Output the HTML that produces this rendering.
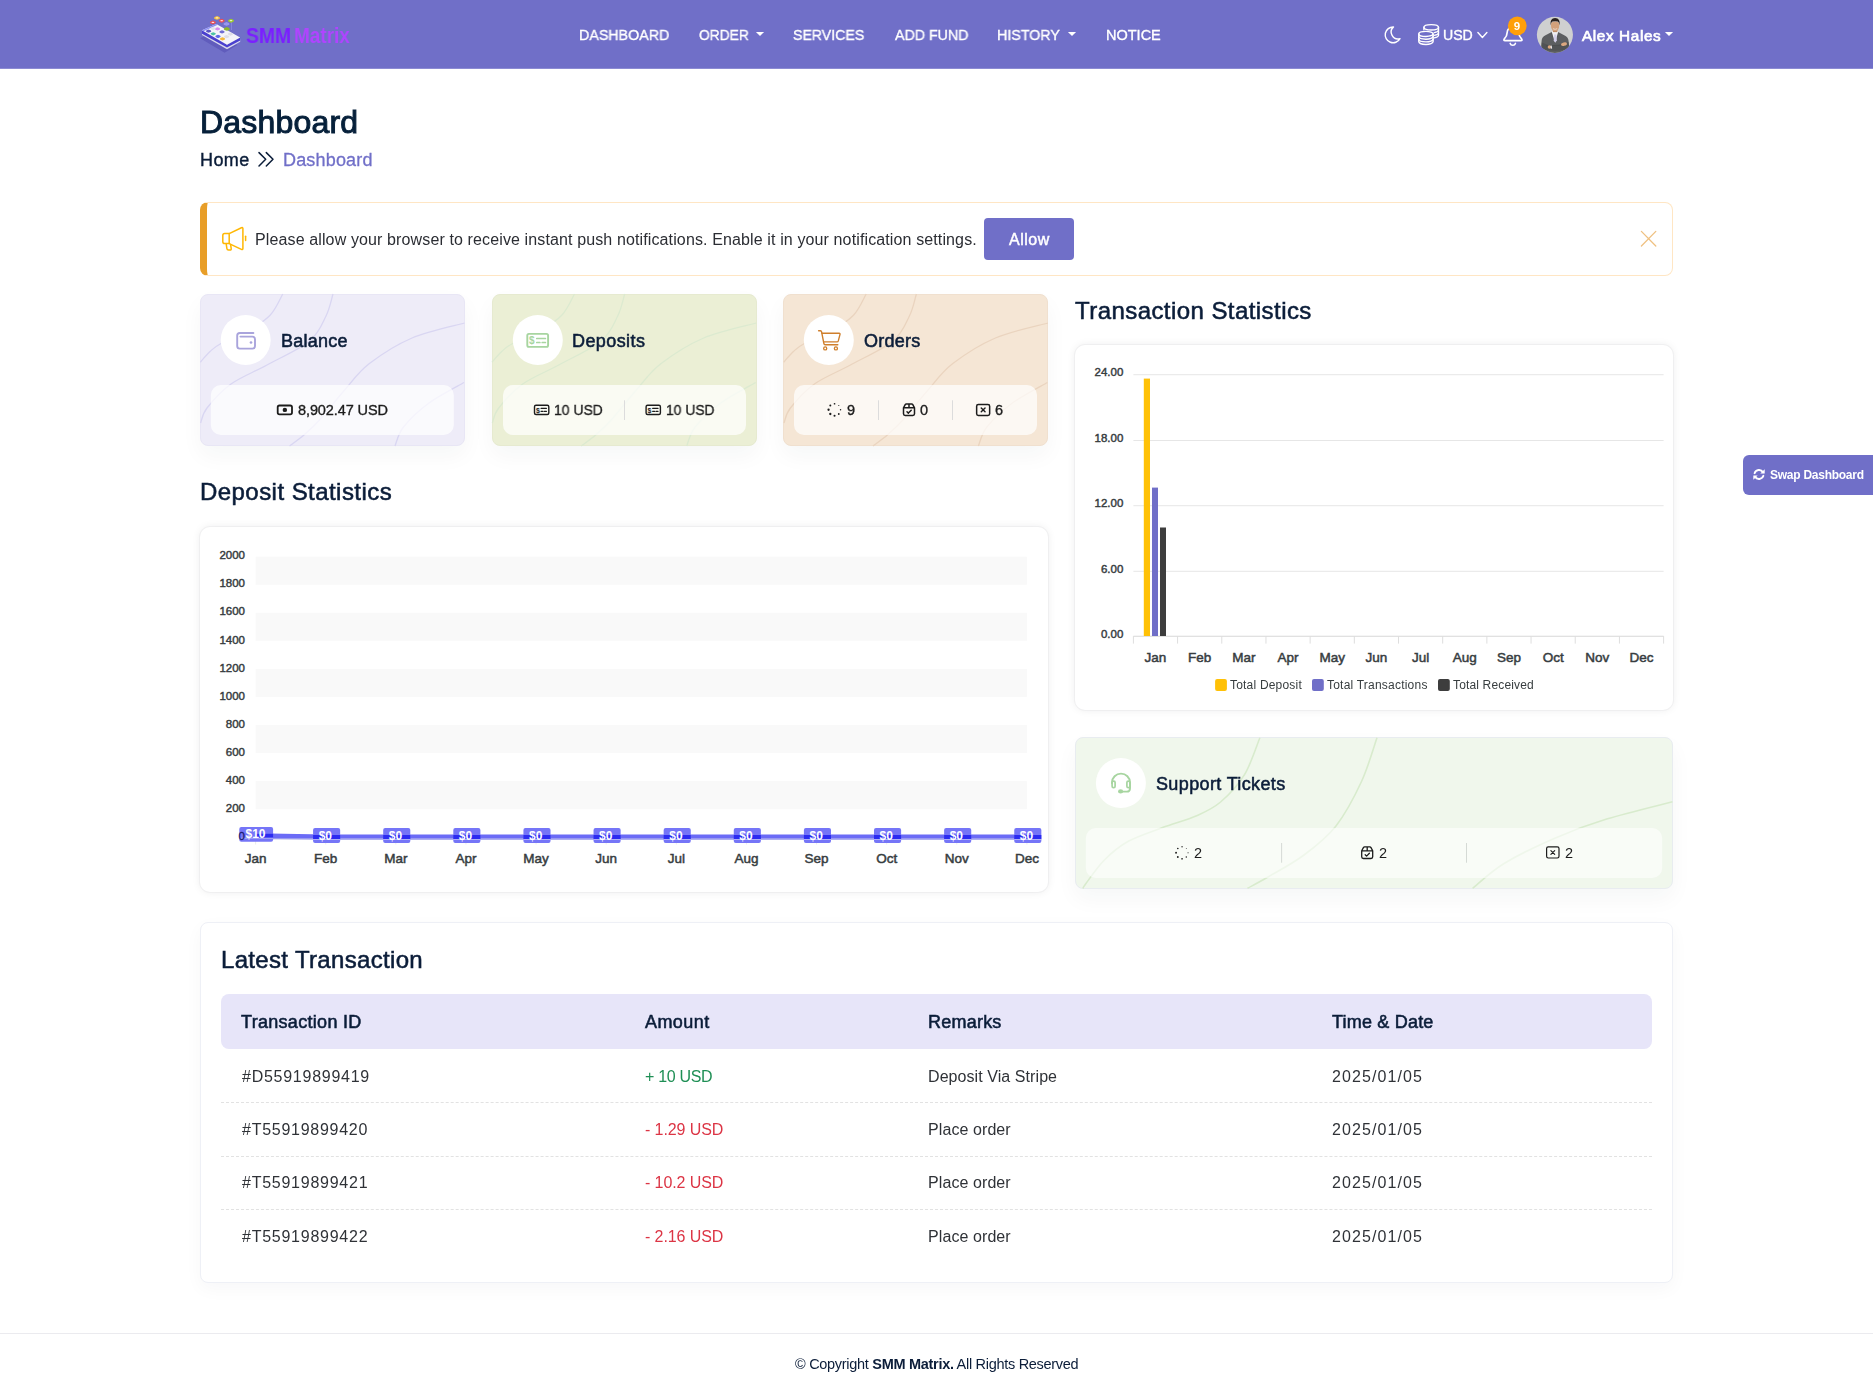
<!DOCTYPE html>
<html lang="en"><head><meta charset="utf-8"><title>SMM Matrix | Dashboard</title>
<style>

*{box-sizing:border-box;margin:0;padding:0}
html,body{width:1873px;height:1394px;overflow:hidden;background:#fff}
body{position:relative;font-family:"Liberation Sans",sans-serif;color:#2b2f38}
.t{position:absolute;white-space:nowrap;line-height:1;display:block;will-change:transform}
.abs{position:absolute}
.nav{left:0;top:0;width:1873px;height:69px;background:#706fc8;border-bottom:1px solid #8c8bd3}
.card{position:absolute;border-radius:8px;border:1px solid transparent;box-shadow:0 10px 22px rgba(30,40,60,.04)}
.wcard{position:absolute;background:#fff;border-radius:10px;box-shadow:0 0 0 1px rgba(20,20,40,.03),0 0 9px rgba(20,20,40,.08)}
.tcard{position:absolute;background:#fff;border:1px solid #eef0f6;border-radius:8px;box-shadow:0 6px 18px rgba(30,40,60,.035)}
svg.layer{position:absolute;left:0;top:0;width:1873px;height:1394px;overflow:visible}

</style></head><body>
<div class="abs nav"></div>
<div class="abs" style="left:200px;top:202px;width:1473px;height:74px;border:1px solid #ffe6c4;border-left:7px solid #e89e28;border-radius:8px;background:#fff"></div>
<div class="abs" style="left:984px;top:218px;width:90px;height:42px;border-radius:4px;background:#706fc8"></div>
<div class="card" style="left:200px;top:294px;width:265px;height:152px;background:#eeecf8;border-color:#e8e6f5"></div>
<div class="card" style="left:491.7px;top:294px;width:265px;height:152px;background:#ebefd5;border-color:#e6ead0"></div>
<div class="card" style="left:783.4px;top:294px;width:265px;height:152px;background:#f5e6d5;border-color:#f0e0cf"></div>
<div class="card" style="left:1075px;top:737px;width:598px;height:152px;background:#f0f7ec;border:1px solid #e8ecf0;border-radius:8px"></div>
<div class="wcard" style="left:200px;top:526.7px;width:848.4px;height:365.5px"></div>
<div class="wcard" style="left:1075.2px;top:345px;width:597.6px;height:365px"></div>
<div class="tcard" style="left:200px;top:922px;width:1473px;height:361px"></div>
<div class="abs" style="left:221px;top:994px;width:1430.6px;height:55px;border-radius:8px;background:#e7e5f9"></div>
<div class="abs" style="left:221px;top:1101.9px;width:1430.6px;height:0;border-top:1px dashed #e2e2e2"></div>
<div class="abs" style="left:221px;top:1155.7px;width:1430.6px;height:0;border-top:1px dashed #e2e2e2"></div>
<div class="abs" style="left:221px;top:1208.7px;width:1430.6px;height:0;border-top:1px dashed #e2e2e2"></div>
<div class="abs" style="left:0;top:1332.5px;width:1873px;height:1px;background:#ebebef"></div>
<div class="abs" style="left:1743px;top:455px;width:130px;height:39.6px;border-radius:6px 0 0 6px;background:#706fc8"></div>
<svg class="layer" viewBox="0 0 1873 1394">
<path d="M282.8,294.0 C280.7,297.5 276.1,308.8 270.3,315.0 C264.5,321.2 256.3,326.2 248.0,331.0 C239.7,335.8 226.9,340.4 220.6,343.8 C214.3,347.2 213.4,348.4 210.0,351.5 C206.6,354.6 201.9,360.4 200.3,362.2" fill="none" stroke="#d9d6f2" stroke-width="1.3"/>
<path d="M333.0,294.0 C331.8,297.7 329.9,308.2 326.0,316.0 C322.1,323.8 319.4,332.8 309.6,341.0 C299.8,349.2 280.1,357.8 267.0,365.0 C253.9,372.2 241.0,376.8 231.0,384.0 C221.0,391.2 212.1,401.5 207.0,408.0 C201.9,414.5 201.7,420.5 200.6,423.0" fill="none" stroke="#d9d6f2" stroke-width="1.3"/>
<path d="M464.5,323.0 C455.8,325.5 427.9,331.2 412.0,338.0 C396.1,344.8 380.8,354.8 369.4,363.6 C358.0,372.4 352.0,381.7 343.8,391.0 C335.6,400.3 326.6,412.2 320.0,419.5 C313.4,426.8 309.6,430.1 304.5,434.5 C299.4,438.9 292.1,444.1 289.6,446.0" fill="none" stroke="#d9d6f2" stroke-width="1.3"/>
<path d="M464.0,382.5 C458.2,385.9 439.1,395.6 429.0,403.0 C418.9,410.4 409.2,419.8 403.5,427.0 C397.8,434.2 396.4,442.8 395.0,446.0" fill="none" stroke="#d9d6f2" stroke-width="1.3"/>
<path d="M574.5,294.0 C572.4,297.5 567.8,308.8 562.0,315.0 C556.2,321.2 548.0,326.2 539.7,331.0 C531.4,335.8 518.6,340.4 512.3,343.8 C506.0,347.2 505.1,348.4 501.7,351.5 C498.3,354.6 493.6,360.4 492.0,362.2" fill="none" stroke="#dcead0" stroke-width="1.3"/>
<path d="M624.7,294.0 C623.5,297.7 621.6,308.2 617.7,316.0 C613.8,323.8 611.1,332.8 601.3,341.0 C591.5,349.2 571.8,357.8 558.7,365.0 C545.6,372.2 532.7,376.8 522.7,384.0 C512.7,391.2 503.8,401.5 498.7,408.0 C493.6,414.5 493.4,420.5 492.3,423.0" fill="none" stroke="#dcead0" stroke-width="1.3"/>
<path d="M756.2,323.0 C747.5,325.5 719.6,331.2 703.7,338.0 C687.9,344.8 672.5,354.8 661.1,363.6 C649.7,372.4 643.7,381.7 635.5,391.0 C627.3,400.3 618.2,412.2 611.7,419.5 C605.2,426.8 601.3,430.1 596.2,434.5 C591.1,438.9 583.8,444.1 581.3,446.0" fill="none" stroke="#dcead0" stroke-width="1.3"/>
<path d="M755.7,382.5 C749.9,385.9 730.8,395.6 720.7,403.0 C710.6,410.4 700.9,419.8 695.2,427.0 C689.5,434.2 688.1,442.8 686.7,446.0" fill="none" stroke="#dcead0" stroke-width="1.3"/>
<path d="M866.2,294.0 C864.1,297.5 859.5,308.8 853.7,315.0 C847.9,321.2 839.7,326.2 831.4,331.0 C823.1,335.8 810.3,340.4 804.0,343.8 C797.7,347.2 796.8,348.4 793.4,351.5 C790.0,354.6 785.3,360.4 783.7,362.2" fill="none" stroke="#ead4bf" stroke-width="1.3"/>
<path d="M916.4,294.0 C915.2,297.7 913.3,308.2 909.4,316.0 C905.5,323.8 902.8,332.8 893.0,341.0 C883.2,349.2 863.5,357.8 850.4,365.0 C837.3,372.2 824.4,376.8 814.4,384.0 C804.4,391.2 795.5,401.5 790.4,408.0 C785.3,414.5 785.1,420.5 784.0,423.0" fill="none" stroke="#ead4bf" stroke-width="1.3"/>
<path d="M1047.9,323.0 C1039.2,325.5 1011.2,331.2 995.4,338.0 C979.5,344.8 964.2,354.8 952.8,363.6 C941.4,372.4 935.4,381.7 927.2,391.0 C919.0,400.3 910.0,412.2 903.4,419.5 C896.8,426.8 893.0,430.1 887.9,434.5 C882.8,438.9 875.5,444.1 873.0,446.0" fill="none" stroke="#ead4bf" stroke-width="1.3"/>
<path d="M1047.4,382.5 C1041.6,385.9 1022.5,395.6 1012.4,403.0 C1002.3,410.4 992.6,419.8 986.9,427.0 C981.2,434.2 979.8,442.8 978.4,446.0" fill="none" stroke="#ead4bf" stroke-width="1.3"/>
<path d="M1259.9,737.8 C1257.3,743.9 1251.0,764.0 1244.5,774.7 C1238.0,785.4 1228.6,795.2 1220.6,802.0 C1212.6,808.8 1206.4,811.4 1196.7,815.7 C1187.0,820.0 1173.9,823.3 1162.5,827.6 C1151.1,831.9 1138.0,835.9 1128.3,841.3 C1118.6,846.7 1111.5,852.9 1104.4,860.0 C1097.3,867.1 1089.2,879.2 1085.6,884.0 C1082.0,888.8 1083.4,887.8 1083.0,888.5" fill="none" stroke="#d8ebcd" stroke-width="1.6"/>
<path d="M1377.0,737.8 C1374.4,745.1 1368.3,766.8 1361.5,781.5 C1354.7,796.2 1345.6,813.6 1336.0,825.9 C1326.4,838.1 1315.3,846.5 1304.0,855.0 C1292.7,863.5 1277.4,871.5 1268.0,877.0 C1258.6,882.5 1250.9,886.4 1247.5,888.3" fill="none" stroke="#d8ebcd" stroke-width="1.6"/>
<path d="M1672.5,801.8 C1661.5,804.7 1626.1,813.1 1606.6,819.1 C1587.1,825.1 1572.5,830.5 1555.4,837.9 C1538.3,845.3 1517.9,855.1 1504.1,863.5 C1490.3,871.9 1477.8,884.2 1472.6,888.3" fill="none" stroke="#d8ebcd" stroke-width="1.6"/>
<rect x="210.8" y="385" width="243" height="50" rx="10" fill="#fff" fill-opacity=".72"/>
<rect x="503" y="385" width="243" height="50" rx="10" fill="#fff" fill-opacity=".72"/>
<rect x="794" y="385" width="243" height="50" rx="10" fill="#fff" fill-opacity=".72"/>
<rect x="1085.8" y="828" width="576.4" height="50" rx="10" fill="#fff" fill-opacity=".6"/>
<circle cx="245.7" cy="340" r="25" fill="#fff"/>
<circle cx="537.8" cy="340" r="25" fill="#fff"/>
<circle cx="828.8" cy="340" r="25" fill="#fff"/>
<circle cx="1120.9" cy="783" r="25" fill="#fff"/>
<rect x="624.0" y="400.3" width="1" height="19.7" fill="#dcdcdc"/>
<rect x="878.0" y="400.3" width="1" height="19.7" fill="#dcdcdc"/>
<rect x="952.0" y="400.3" width="1" height="19.7" fill="#dcdcdc"/>
<rect x="1281.1" y="843" width="1" height="19.7" fill="#d5dad5"/>
<rect x="1466.0" y="843" width="1" height="19.7" fill="#d5dad5"/>
<path d="M755.9,32 L764.1,32 L760.0,36.1 Z" fill="#fff"/>
<path d="M1067.9,32 L1076.1,32 L1072.0,36.1 Z" fill="#fff"/>
<path d="M1664.9,32 L1673.1,32 L1669.0,36.1 Z" fill="#fff"/>
<g transform="translate(1385.5 26.2) scale(0.93)"><path d="M8.6,0.8 A8.5,8.5 0 1 0 15.6,13.4 A7.4,7.4 0 0 1 8.6,0.8 Z" fill="none" stroke="#fff" stroke-width="1.5" stroke-linecap="round" stroke-linejoin="round" /></g>
<path d="M1418.8,33.9 a7.15,2.5 0 1 0 14.3,0 a7.15,2.5 0 1 0 -14.3,0 Z" fill="none" stroke="#fff" stroke-width="1.45" stroke-linecap="round" stroke-linejoin="round" />
<path d="M1418.8,33.9 v7.7 a7.15,2.9 0 0 0 14.3,0 v-7.7" fill="none" stroke="#fff" stroke-width="1.45" stroke-linecap="round" stroke-linejoin="round" />
<path d="M1418.8,36.3 a7.15,2.9 0 0 0 14.3,0" fill="none" stroke="#fff" stroke-width="1.35" stroke-linecap="round" stroke-linejoin="round" />
<path d="M1418.8,38.95 a7.15,2.9 0 0 0 14.3,0" fill="none" stroke="#fff" stroke-width="1.35" stroke-linecap="round" stroke-linejoin="round" />
<path d="M1423.9,27.3 a7.3,2.7 0 1 0 14.6,0 a7.3,2.7 0 1 0 -14.6,0 Z" fill="none" stroke="#fff" stroke-width="1.4" stroke-linecap="round" stroke-linejoin="round" />
<path d="M1423.9,27.3 v2.4 M1438.5,27.3 v8 a7.3,2.9 0 0 1 -4.3,2.6" fill="none" stroke="#fff" stroke-width="1.4" stroke-linecap="round" stroke-linejoin="round" />
<path d="M1438.5,30.1 a7.3,2.9 0 0 1 -4.3,2.6 M1438.5,32.8 a7.3,2.9 0 0 1 -4.3,2.6" fill="none" stroke="#fff" stroke-width="1.3" stroke-linecap="round" stroke-linejoin="round" />
<path d="M1477.9,32.6 L1482.4,37.4 L1486.9,32.6" fill="none" stroke="#fff" stroke-width="1.4" stroke-linecap="round" stroke-linejoin="round" />
<path d="M1504.3,38.9 C1505.8,37.4 1507.1,35.8 1507.1,32.8 A5.85,5.85 0 0 1 1518.8,32.8 C1518.8,35.8 1520.1,37.4 1521.6,38.9 Q1522.8,40.7 1520.8,40.7 H1505.1 Q1503.1,40.7 1504.3,38.9 Z" fill="none" stroke="#fff" stroke-width="1.7" stroke-linecap="round" stroke-linejoin="round" />
<path d="M1510.2,43.4 a2.7,2.5 0 0 0 5.2,0" fill="none" stroke="#fff" stroke-width="1.6" stroke-linecap="round" stroke-linejoin="round" />
<circle cx="1517.3" cy="25.8" r="9.4" fill="#ff9f0a"/>
<clipPath id="avc"><circle cx="1554.9" cy="34.85" r="18.05"/></clipPath>
<g clip-path="url(#avc)">
<rect x="1536" y="16" width="38" height="38" fill="#cfd0d0"/>
<path d="M1540.8,54 L1541.6,41 Q1541.8,36.6 1545.5,35.2 L1551.2,32.2 L1555.1,36 L1558.6,32.2 L1564.2,35.2 Q1568.2,36.6 1568.6,41 L1569.6,54 Z" fill="#5c5e60"/>
<path d="M1551.2,32.2 L1555.1,43.5 L1558.6,32.2 L1557.6,31.6 L1555.1,35 L1552.2,31.6 Z" fill="#4a4c4e"/>
<path d="M1551.6,31.6 L1555.1,43 L1558.3,31.6 L1556.5,30.6 L1553.5,30.6 Z" fill="#f0f0f2"/>
<path d="M1554.2,34.4 L1556.3,34.4 L1556.9,40.4 L1555.2,42.6 L1553.7,40.4 Z" fill="#d3cfea"/>
<rect x="1552.9" y="28.5" width="4.4" height="3.6" fill="#b9855f"/>
<path d="M1550.9,25 Q1550.7,21.6 1555.1,21.4 Q1559.5,21.6 1559.3,25 Q1559.3,28.6 1557.6,30.4 Q1555.1,32.2 1552.6,30.4 Q1550.9,28.6 1550.9,25 Z" fill="#d2a17b"/>
<path d="M1553,28.7 Q1555.1,30 1557.2,28.7" fill="none" stroke="#f4ece6" stroke-width=".7"/>
<path d="M1550.6,25.4 Q1549.6,18.4 1555.1,18.1 Q1560.6,18.4 1559.6,25.4 Q1559.2,22.2 1557.8,21.6 Q1555.1,21 1552.4,21.6 Q1551,22.2 1550.6,25.4 Z" fill="#2a2320"/>
<path d="M1541.8,42.5 Q1548,46 1556,45.4 Q1563,45 1568.4,42 L1569.4,48.6 Q1556,53 1541.4,48.8 Z" fill="#515355"/>
<path d="M1546,46 L1566,44.6" stroke="#444648" stroke-width=".6"/>
<ellipse cx="1564" cy="44.1" rx="3" ry="1.7" fill="#dba77f" transform="rotate(-12 1564 44.1)"/>
<ellipse cx="1549.4" cy="47" rx="1.7" ry="1.7" fill="#dba77f"/>
<rect x="1550.6" y="45.6" width="1.3" height="3" fill="#eceaf0" transform="rotate(-8 1551 47)"/>
</g>
<path d="M259,152.6 L265.7,159.3 L259,166 M266.3,152.6 L273,159.3 L266.3,166" fill="none" stroke="#0b1d39" stroke-width="1.5" stroke-linecap="round" stroke-linejoin="round" />
<path d="M229.2,233.6 H224.6 Q222.8,233.6 222.8,235.4 V241.8 Q222.8,243.6 224.6,243.6 H229.2 L241.4,249.4 Q242.9,250 242.9,248.4 V228.6 Q242.9,227 241.4,227.7 L229.2,233.6 V243.6" fill="none" stroke="#ffb703" stroke-width="1.5" stroke-linecap="round" stroke-linejoin="round" />
<path d="M226.2,243.8 L226.9,248.6 Q227.1,250 228.5,250 H230 Q231.4,250 231.2,248.6 L230.6,244.4" fill="none" stroke="#ffb703" stroke-width="1.5" stroke-linecap="round" stroke-linejoin="round" />
<path d="M245.6,236.2 V240.6" fill="none" stroke="#ffb703" stroke-width="1.5" stroke-linecap="round" stroke-linejoin="round" />
<path d="M1641.4,231.4 L1655.8,246 M1655.8,231.4 L1641.4,246" fill="none" stroke="#efc182" stroke-width="1.3" stroke-linecap="round" stroke-linejoin="round" />
<path d="M253.4,333 H239.8 Q237.2,333 237.2,335.6 V346 Q237.2,348.6 239.8,348.6 H252.4 Q255,348.6 255,346 V339.2 Q255,336.6 252.4,336.6 H240.4" fill="none" stroke="#a9a4dc" stroke-width="1.9" stroke-linecap="round" stroke-linejoin="round" />
<circle cx="251" cy="342.5" r="1.35" fill="#a9a4dc"/>
<rect x="527.3" y="333.9" width="20.8" height="13" rx="1.6" fill="none" stroke="#a7d5a0" stroke-width="1.9"/>
<text x="531.9" y="344.2" font-family="Liberation Sans, sans-serif" font-weight="700" font-size="10" fill="#a7d5a0" text-anchor="middle">$</text>
<path d="M536.8,338.5 H545.4 M536.8,342.5 H539.9 M542.2,342.5 H545.4" fill="none" stroke="#a7d5a0" stroke-width="1.7" stroke-linecap="round" stroke-linejoin="round" />
<path d="M818.6,330.8 H820.4 Q821.4,330.8 821.6,331.8 L823.9,343.7 Q824.1,344.7 825.1,344.7 H837.8" fill="none" stroke="#cf7f2c" stroke-width="1.4" stroke-linecap="round" stroke-linejoin="round" />
<path d="M822,333.3 H839.2 Q840.3,333.3 840,334.4 L838.3,340.9 Q838,341.9 837,341.9 H823.6" fill="none" stroke="#cf7f2c" stroke-width="1.4" stroke-linecap="round" stroke-linejoin="round" />
<circle cx="825.2" cy="348.4" r="1.55" fill="none" stroke="#cf7f2c" stroke-width="1.3"/><circle cx="835.9" cy="348.4" r="1.55" fill="none" stroke="#cf7f2c" stroke-width="1.3"/>
<rect x="277.7" y="405.5" width="14.3" height="8.8" rx="1.8" fill="none" stroke="#1c1c1c" stroke-width="1.8"/><circle cx="284.85" cy="409.9" r="2.2" fill="#1c1c1c"/>
<rect x="534.5" y="405.3" width="14.3" height="9.2" rx="1.5" fill="none" stroke="#1c1c1c" stroke-width="1.4"/><text x="537.9" y="412.5" font-family="Liberation Sans, sans-serif" font-weight="700" font-size="7" fill="#1c1c1c" text-anchor="middle">$</text><path d="M541.0999999999999,408.4 H546.4 M541.0999999999999,411.4 H543.0 M544.4,411.4 H546.4" fill="none" stroke="#1c1c1c" stroke-width="1.2" stroke-linecap="round" stroke-linejoin="round" />
<rect x="646.1" y="405.3" width="14.3" height="9.2" rx="1.5" fill="none" stroke="#1c1c1c" stroke-width="1.4"/><text x="649.5" y="412.5" font-family="Liberation Sans, sans-serif" font-weight="700" font-size="7" fill="#1c1c1c" text-anchor="middle">$</text><path d="M652.6999999999999,408.4 H658.0 M652.6999999999999,411.4 H654.6 M656.0,411.4 H658.0" fill="none" stroke="#1c1c1c" stroke-width="1.2" stroke-linecap="round" stroke-linejoin="round" />
<circle cx="834.55" cy="403.75" r="0.84" fill="#1c1c1c"/><circle cx="838.79" cy="405.51" r="0.58" fill="#1c1c1c"/><circle cx="840.55" cy="409.75" r="0.73" fill="#1c1c1c"/><circle cx="838.79" cy="413.99" r="0.89" fill="#1c1c1c"/><circle cx="834.55" cy="415.75" r="1.05" fill="#1c1c1c"/><circle cx="830.31" cy="413.99" r="1.16" fill="#1c1c1c"/><circle cx="828.55" cy="409.75" r="1.16" fill="#1c1c1c"/><circle cx="830.31" cy="405.51" r="1.00" fill="#1c1c1c"/>
<circle cx="1182.05" cy="846.75" r="0.68" fill="#1c1c1c"/><circle cx="1186.29" cy="848.51" r="0.47" fill="#1c1c1c"/><circle cx="1188.05" cy="852.75" r="0.59" fill="#1c1c1c"/><circle cx="1186.29" cy="856.99" r="0.72" fill="#1c1c1c"/><circle cx="1182.05" cy="858.75" r="0.85" fill="#1c1c1c"/><circle cx="1177.81" cy="856.99" r="0.94" fill="#1c1c1c"/><circle cx="1176.05" cy="852.75" r="0.94" fill="#1c1c1c"/><circle cx="1177.81" cy="848.51" r="0.81" fill="#1c1c1c"/>
<path d="M903.5,407.8 L905.1999999999999,404.59999999999997 Q905.5999999999999,403.9 906.4,403.9 H911.5999999999999 Q912.4,403.9 912.8,404.59999999999997 L914.5,407.8 V413.8 Q914.5,415.5 912.8,415.5 H905.1999999999999 Q903.5,415.5 903.5,413.8 Z M903.5,407.8 H914.5 M909.0,403.9 V407.8" fill="none" stroke="#1c1c1c" stroke-width="1.5" stroke-linecap="round" stroke-linejoin="round" /><path d="M907.0,411.7 L908.4,413.09999999999997 L911.1999999999999,410.2" fill="none" stroke="#1c1c1c" stroke-width="1.5" stroke-linecap="round" stroke-linejoin="round" />
<path d="M1361.7,850.8000000000001 L1363.4,847.6 Q1363.8,846.9000000000001 1364.6,846.9000000000001 H1369.8 Q1370.6,846.9000000000001 1371,847.6 L1372.7,850.8000000000001 V856.8000000000001 Q1372.7,858.5 1371,858.5 H1363.4 Q1361.7,858.5 1361.7,856.8000000000001 Z M1361.7,850.8000000000001 H1372.7 M1367.2,846.9000000000001 V850.8000000000001" fill="none" stroke="#1c1c1c" stroke-width="1.3" stroke-linecap="round" stroke-linejoin="round" /><path d="M1365.2,854.7 L1366.6,856.1 L1369.4,853.2" fill="none" stroke="#1c1c1c" stroke-width="1.3" stroke-linecap="round" stroke-linejoin="round" />
<rect x="976.65" y="404.45" width="13.0" height="11.0" rx="1.7" fill="none" stroke="#1c1c1c" stroke-width="1.5"/><path d="M981.25,408.05 L985.05,411.84999999999997 M985.05,408.05 L981.25,411.84999999999997" fill="none" stroke="#1c1c1c" stroke-width="1.4249999999999998" stroke-linecap="round" stroke-linejoin="round" />
<rect x="1546.6" y="846.9" width="12.4" height="11.100000000000001" rx="1.7" fill="none" stroke="#1c1c1c" stroke-width="1.2"/><path d="M1550.8999999999999,850.55 L1554.7,854.3499999999999 M1554.7,850.55 L1550.8999999999999,854.3499999999999" fill="none" stroke="#1c1c1c" stroke-width="1.14" stroke-linecap="round" stroke-linejoin="round" />
<path d="M1112,783.2 V782.6 A9,9 0 0 1 1130,782.6 V788.4 Q1130,791.6 1126.8,791.6 H1122.4" fill="none" stroke="#a7d5a0" stroke-width="1.9" stroke-linecap="round" stroke-linejoin="round" />
<rect x="1112.1" y="781.2" width="3" height="6.4" rx="1.4" fill="none" stroke="#a7d5a0" stroke-width="1.7"/><rect x="1126.9" y="781.2" width="3" height="6.4" rx="1.4" fill="none" stroke="#a7d5a0" stroke-width="1.7"/>
<ellipse cx="1120.6" cy="791.4" rx="2.6" ry="2.1" fill="#a7d5a0"/>
<path d="M1754.6,473.2 A4.7,4.7 0 0 1 1763,472.2 M1763.4,475.8 A4.7,4.7 0 0 1 1755,476.8" fill="none" stroke="#fff" stroke-width="1.9" stroke-linecap="round" stroke-linejoin="round" />
<path d="M1764.7,469.2 V473.6 H1760.3 Z M1753.3,479.8 V475.4 H1757.7 Z" fill="#fff"/>
<path d="M200.1,38.2 L213,31.5 L237.3,45.1 L224.6,52.7 Z" fill="#605cbc"/>
<path d="M202,31.5 L202,35 L227,49.2 L240.2,41.8 L240.2,38.5 L227,45 Z" fill="#d9d9ec"/>
<path d="M202,30.3 L202,33.8 L227,47.6 L240.2,40.6 L240.2,37.5 L227,44.8 Z" fill="#4a40cf"/>
<path d="M202,30.3 L216.3,23.9 L240.2,37.5 L227,44.8 Z" fill="#f4f4f9"/>
<path d="M202,30.3 L216.3,23.9 L217.8,24.8 L203.6,31.2 Z" fill="#8d90f4"/>
<path d="M214.80,28.90 Q214.80,28.17 217.50,27.25 Q220.20,28.17 220.20,28.90 Q220.20,29.63 217.50,30.55 Q214.80,29.63 214.80,28.90 Z" fill="#d68df0"/>
<path d="M205.90,31.20 Q205.90,30.47 208.60,29.55 Q211.30,30.47 211.30,31.20 Q211.30,31.93 208.60,32.85 Q205.90,31.93 205.90,31.20 Z" fill="#5a55c4"/>
<path d="M210.50,33.80 Q210.50,33.07 213.20,32.15 Q215.90,33.07 215.90,33.80 Q215.90,34.53 213.20,35.45 Q210.50,34.53 210.50,33.80 Z" fill="#4cc4a4"/>
<path d="M219.30,31.90 Q219.30,31.17 222.00,30.25 Q224.70,31.17 224.70,31.90 Q224.70,32.63 222.00,33.55 Q219.30,32.63 219.30,31.90 Z" fill="#6f6dd2"/>
<path d="M215.30,36.50 Q215.30,35.77 218.00,34.85 Q220.70,35.77 220.70,36.50 Q220.70,37.23 218.00,38.15 Q215.30,37.23 215.30,36.50 Z" fill="#5f68ea"/>
<path d="M219.80,38.90 Q219.80,38.17 222.50,37.25 Q225.20,38.17 225.20,38.90 Q225.20,39.63 222.50,40.55 Q219.80,39.63 219.80,38.90 Z" fill="#f5b83d"/>
<path d="M227.70,34.10 Q227.70,33.37 230.40,32.45 Q233.10,33.37 233.10,34.10 Q233.10,34.83 230.40,35.75 Q227.70,34.83 227.70,34.10 Z" fill="#dedee6"/>
<path d="M223.90,36.70 Q223.90,35.97 226.60,35.05 Q229.30,35.97 229.30,36.70 Q229.30,37.43 226.60,38.35 Q223.90,37.43 223.90,36.70 Z" fill="#dedee6"/>
<path d="M210.30,28.60 Q210.30,27.87 213.00,26.95 Q215.70,27.87 215.70,28.60 Q215.70,29.33 213.00,30.25 Q210.30,29.33 210.30,28.60 Z" fill="#e2e2ea"/>
<path d="M231.5,22 V30" stroke="#9a98f0" stroke-width=".5"/>
<path d="M213.90,17.90 Q213.90,17.04 217.00,15.95 Q220.10,17.04 220.10,17.90 Q220.10,18.76 217.00,19.85 Q213.90,18.76 213.90,17.90 Z" fill="#f7c33e"/>
<path d="M209.80,22.40 Q209.80,21.54 212.90,20.45 Q216.00,21.54 216.00,22.40 Q216.00,23.26 212.90,24.35 Q209.80,23.26 209.80,22.40 Z" fill="#ec4d55"/>
<path d="M218.60,20.80 Q218.60,19.94 221.70,18.85 Q224.80,19.94 224.80,20.80 Q224.80,21.66 221.70,22.75 Q218.60,21.66 218.60,20.80 Z" fill="#ec4d55"/>
<path d="M227.90,20.70 Q227.90,19.84 231.00,18.75 Q234.10,19.84 234.10,20.70 Q234.10,21.56 231.00,22.65 Q227.90,21.56 227.90,20.70 Z" fill="#9ccc2a"/>
<path d="M223.40,23.90 Q223.40,23.04 226.50,21.95 Q229.60,23.04 229.60,23.90 Q229.60,24.76 226.50,25.85 Q223.40,24.76 223.40,23.90 Z" fill="#9a98f0"/>
<path d="M223.70,28.90 Q223.70,28.04 226.80,26.95 Q229.90,28.04 229.90,28.90 Q229.90,29.76 226.80,30.85 Q223.70,29.76 223.70,28.90 Z" fill="#8bb82a"/>
<ellipse cx="212.9" cy="22.4" rx="1.4" ry=".6" fill="#fff" opacity=".8"/>
<ellipse cx="221.7" cy="20.7" rx="1.4" ry=".6" fill="#fff" opacity=".8"/>
<ellipse cx="231" cy="20.6" rx="1.4" ry=".6" fill="#fff" opacity=".8"/>
<ellipse cx="217" cy="17.8" rx="1.4" ry=".6" fill="#fff" opacity=".8"/>
<rect x="255.6" y="556.70" width="771.3" height="28.05" fill="#f9f9f9"/>
<rect x="255.6" y="612.80" width="771.3" height="28.05" fill="#f9f9f9"/>
<rect x="255.6" y="668.90" width="771.3" height="28.05" fill="#f9f9f9"/>
<rect x="255.6" y="725.00" width="771.3" height="28.05" fill="#f9f9f9"/>
<rect x="255.6" y="781.10" width="771.3" height="28.05" fill="#f9f9f9"/>
<rect x="255.10" y="839" width="1" height="5.5" fill="#ececec"/>
<rect x="325.22" y="839" width="1" height="5.5" fill="#ececec"/>
<rect x="395.34" y="839" width="1" height="5.5" fill="#ececec"/>
<rect x="465.45" y="839" width="1" height="5.5" fill="#ececec"/>
<rect x="535.57" y="839" width="1" height="5.5" fill="#ececec"/>
<rect x="605.69" y="839" width="1" height="5.5" fill="#ececec"/>
<rect x="675.81" y="839" width="1" height="5.5" fill="#ececec"/>
<rect x="745.93" y="839" width="1" height="5.5" fill="#ececec"/>
<rect x="816.05" y="839" width="1" height="5.5" fill="#ececec"/>
<rect x="886.16" y="839" width="1" height="5.5" fill="#ececec"/>
<rect x="956.28" y="839" width="1" height="5.5" fill="#ececec"/>
<rect x="1026.40" y="839" width="1" height="5.5" fill="#ececec"/>
<path d="M255.6,835.9 L325.72,837.2 L1026.9,837.2" fill="none" stroke="#6b6bf6" stroke-width="5.5" stroke-linejoin="round"/>
<rect x="255.6" y="838.6" width="771.3" height="1" fill="#dcdcec"/>
<rect x="239.30" y="826.9" width="33.8" height="14.80" rx="2" fill="#7575f7"/><rect x="256.00" y="833.80" width="17.10" height="4" fill="#2b2bf1"/><rect x="239.30" y="837.80" width="33.8" height=".7" fill="#c9c9f5"/>
<rect x="313.07" y="828.1" width="27.1" height="14.80" rx="2" fill="#7575f7"/><rect x="313.07" y="835.00" width="27.10" height="4" fill="#2b2bf1"/><rect x="313.07" y="839.00" width="27.1" height=".7" fill="#c9c9f5"/>
<rect x="383.19" y="828.1" width="27.1" height="14.80" rx="2" fill="#7575f7"/><rect x="383.19" y="835.00" width="27.10" height="4" fill="#2b2bf1"/><rect x="383.19" y="839.00" width="27.1" height=".7" fill="#c9c9f5"/>
<rect x="453.30" y="828.1" width="27.1" height="14.80" rx="2" fill="#7575f7"/><rect x="453.30" y="835.00" width="27.10" height="4" fill="#2b2bf1"/><rect x="453.30" y="839.00" width="27.1" height=".7" fill="#c9c9f5"/>
<rect x="523.42" y="828.1" width="27.1" height="14.80" rx="2" fill="#7575f7"/><rect x="523.42" y="835.00" width="27.10" height="4" fill="#2b2bf1"/><rect x="523.42" y="839.00" width="27.1" height=".7" fill="#c9c9f5"/>
<rect x="593.54" y="828.1" width="27.1" height="14.80" rx="2" fill="#7575f7"/><rect x="593.54" y="835.00" width="27.10" height="4" fill="#2b2bf1"/><rect x="593.54" y="839.00" width="27.1" height=".7" fill="#c9c9f5"/>
<rect x="663.66" y="828.1" width="27.1" height="14.80" rx="2" fill="#7575f7"/><rect x="663.66" y="835.00" width="27.10" height="4" fill="#2b2bf1"/><rect x="663.66" y="839.00" width="27.1" height=".7" fill="#c9c9f5"/>
<rect x="733.78" y="828.1" width="27.1" height="14.80" rx="2" fill="#7575f7"/><rect x="733.78" y="835.00" width="27.10" height="4" fill="#2b2bf1"/><rect x="733.78" y="839.00" width="27.1" height=".7" fill="#c9c9f5"/>
<rect x="803.90" y="828.1" width="27.1" height="14.80" rx="2" fill="#7575f7"/><rect x="803.90" y="835.00" width="27.10" height="4" fill="#2b2bf1"/><rect x="803.90" y="839.00" width="27.1" height=".7" fill="#c9c9f5"/>
<rect x="874.01" y="828.1" width="27.1" height="14.80" rx="2" fill="#7575f7"/><rect x="874.01" y="835.00" width="27.10" height="4" fill="#2b2bf1"/><rect x="874.01" y="839.00" width="27.1" height=".7" fill="#c9c9f5"/>
<rect x="944.13" y="828.1" width="27.1" height="14.80" rx="2" fill="#7575f7"/><rect x="944.13" y="835.00" width="27.10" height="4" fill="#2b2bf1"/><rect x="944.13" y="839.00" width="27.1" height=".7" fill="#c9c9f5"/>
<rect x="1014.25" y="828.1" width="27.1" height="14.80" rx="2" fill="#7575f7"/><rect x="1014.25" y="835.00" width="27.10" height="4" fill="#2b2bf1"/><rect x="1014.25" y="839.00" width="27.1" height=".7" fill="#c9c9f5"/>
<rect x="1133.4" y="374.2" width="530.2" height="1" fill="#e6e6e6"/>
<rect x="1133.4" y="440.0" width="530.2" height="1" fill="#e6e6e6"/>
<rect x="1133.4" y="505.2" width="530.2" height="1" fill="#e6e6e6"/>
<rect x="1133.4" y="570.8" width="530.2" height="1" fill="#e6e6e6"/>
<rect x="1133.4" y="635.7" width="530.2" height="1.2" fill="#dedede"/>
<rect x="1132.90" y="636" width="1" height="7.6" fill="#dedede"/>
<rect x="1177.08" y="636" width="1" height="7.6" fill="#dedede"/>
<rect x="1221.27" y="636" width="1" height="7.6" fill="#dedede"/>
<rect x="1265.45" y="636" width="1" height="7.6" fill="#dedede"/>
<rect x="1309.63" y="636" width="1" height="7.6" fill="#dedede"/>
<rect x="1353.82" y="636" width="1" height="7.6" fill="#dedede"/>
<rect x="1398.00" y="636" width="1" height="7.6" fill="#dedede"/>
<rect x="1442.18" y="636" width="1" height="7.6" fill="#dedede"/>
<rect x="1486.37" y="636" width="1" height="7.6" fill="#dedede"/>
<rect x="1530.55" y="636" width="1" height="7.6" fill="#dedede"/>
<rect x="1574.73" y="636" width="1" height="7.6" fill="#dedede"/>
<rect x="1618.92" y="636" width="1" height="7.6" fill="#dedede"/>
<rect x="1663.10" y="636" width="1" height="7.6" fill="#dedede"/>
<rect x="1143.8" y="378.6" width="6.2" height="257.4" fill="#ffc107"/>
<rect x="1152" y="487.6" width="6" height="148.4" fill="#706fc8"/>
<rect x="1160" y="527.5" width="6" height="108.5" fill="#3d3d3d"/>
<rect x="1215.1" y="679.1" width="11.8" height="11.8" rx="2" fill="#ffc107"/>
<rect x="1312" y="679.1" width="11.8" height="11.8" rx="2" fill="#706fc8"/>
<rect x="1438" y="679.1" width="11.8" height="11.8" rx="2" fill="#3d3d3d"/>
<text x="245.00" y="559.30" font-family="Liberation Sans, sans-serif" font-size="11.5" font-weight="400" fill="#373d3f" text-anchor="end" stroke="#373d3f" stroke-width="0.45">2000</text>
<text x="245.00" y="587.37" font-family="Liberation Sans, sans-serif" font-size="11.5" font-weight="400" fill="#373d3f" text-anchor="end" stroke="#373d3f" stroke-width="0.45">1800</text>
<text x="245.00" y="615.44" font-family="Liberation Sans, sans-serif" font-size="11.5" font-weight="400" fill="#373d3f" text-anchor="end" stroke="#373d3f" stroke-width="0.45">1600</text>
<text x="245.00" y="643.51" font-family="Liberation Sans, sans-serif" font-size="11.5" font-weight="400" fill="#373d3f" text-anchor="end" stroke="#373d3f" stroke-width="0.45">1400</text>
<text x="245.00" y="671.58" font-family="Liberation Sans, sans-serif" font-size="11.5" font-weight="400" fill="#373d3f" text-anchor="end" stroke="#373d3f" stroke-width="0.45">1200</text>
<text x="245.00" y="699.65" font-family="Liberation Sans, sans-serif" font-size="11.5" font-weight="400" fill="#373d3f" text-anchor="end" stroke="#373d3f" stroke-width="0.45">1000</text>
<text x="245.00" y="727.72" font-family="Liberation Sans, sans-serif" font-size="11.5" font-weight="400" fill="#373d3f" text-anchor="end" stroke="#373d3f" stroke-width="0.45">800</text>
<text x="245.00" y="755.79" font-family="Liberation Sans, sans-serif" font-size="11.5" font-weight="400" fill="#373d3f" text-anchor="end" stroke="#373d3f" stroke-width="0.45">600</text>
<text x="245.00" y="783.86" font-family="Liberation Sans, sans-serif" font-size="11.5" font-weight="400" fill="#373d3f" text-anchor="end" stroke="#373d3f" stroke-width="0.45">400</text>
<text x="245.00" y="811.93" font-family="Liberation Sans, sans-serif" font-size="11.5" font-weight="400" fill="#373d3f" text-anchor="end" stroke="#373d3f" stroke-width="0.45">200</text>
<text x="245.00" y="839.70" font-family="Liberation Sans, sans-serif" font-size="11.5" font-weight="400" fill="#1a1a6e" text-anchor="end" stroke="#1a1a6e" stroke-width="0.3">0</text>
<text x="255.60" y="862.80" font-family="Liberation Sans, sans-serif" font-size="13.5" font-weight="400" fill="#373d3f" text-anchor="middle" stroke="#373d3f" stroke-width="0.5">Jan</text>
<text x="1155.49" y="661.80" font-family="Liberation Sans, sans-serif" font-size="13.5" font-weight="400" fill="#373d3f" text-anchor="middle" stroke="#373d3f" stroke-width="0.5">Jan</text>
<text x="325.72" y="862.80" font-family="Liberation Sans, sans-serif" font-size="13.5" font-weight="400" fill="#373d3f" text-anchor="middle" stroke="#373d3f" stroke-width="0.5">Feb</text>
<text x="1199.68" y="661.80" font-family="Liberation Sans, sans-serif" font-size="13.5" font-weight="400" fill="#373d3f" text-anchor="middle" stroke="#373d3f" stroke-width="0.5">Feb</text>
<text x="395.84" y="862.80" font-family="Liberation Sans, sans-serif" font-size="13.5" font-weight="400" fill="#373d3f" text-anchor="middle" stroke="#373d3f" stroke-width="0.5">Mar</text>
<text x="1243.86" y="661.80" font-family="Liberation Sans, sans-serif" font-size="13.5" font-weight="400" fill="#373d3f" text-anchor="middle" stroke="#373d3f" stroke-width="0.5">Mar</text>
<text x="465.95" y="862.80" font-family="Liberation Sans, sans-serif" font-size="13.5" font-weight="400" fill="#373d3f" text-anchor="middle" stroke="#373d3f" stroke-width="0.5">Apr</text>
<text x="1288.04" y="661.80" font-family="Liberation Sans, sans-serif" font-size="13.5" font-weight="400" fill="#373d3f" text-anchor="middle" stroke="#373d3f" stroke-width="0.5">Apr</text>
<text x="536.07" y="862.80" font-family="Liberation Sans, sans-serif" font-size="13.5" font-weight="400" fill="#373d3f" text-anchor="middle" stroke="#373d3f" stroke-width="0.5">May</text>
<text x="1332.22" y="661.80" font-family="Liberation Sans, sans-serif" font-size="13.5" font-weight="400" fill="#373d3f" text-anchor="middle" stroke="#373d3f" stroke-width="0.5">May</text>
<text x="606.19" y="862.80" font-family="Liberation Sans, sans-serif" font-size="13.5" font-weight="400" fill="#373d3f" text-anchor="middle" stroke="#373d3f" stroke-width="0.5">Jun</text>
<text x="1376.41" y="661.80" font-family="Liberation Sans, sans-serif" font-size="13.5" font-weight="400" fill="#373d3f" text-anchor="middle" stroke="#373d3f" stroke-width="0.5">Jun</text>
<text x="676.31" y="862.80" font-family="Liberation Sans, sans-serif" font-size="13.5" font-weight="400" fill="#373d3f" text-anchor="middle" stroke="#373d3f" stroke-width="0.5">Jul</text>
<text x="1420.59" y="661.80" font-family="Liberation Sans, sans-serif" font-size="13.5" font-weight="400" fill="#373d3f" text-anchor="middle" stroke="#373d3f" stroke-width="0.5">Jul</text>
<text x="746.43" y="862.80" font-family="Liberation Sans, sans-serif" font-size="13.5" font-weight="400" fill="#373d3f" text-anchor="middle" stroke="#373d3f" stroke-width="0.5">Aug</text>
<text x="1464.78" y="661.80" font-family="Liberation Sans, sans-serif" font-size="13.5" font-weight="400" fill="#373d3f" text-anchor="middle" stroke="#373d3f" stroke-width="0.5">Aug</text>
<text x="816.55" y="862.80" font-family="Liberation Sans, sans-serif" font-size="13.5" font-weight="400" fill="#373d3f" text-anchor="middle" stroke="#373d3f" stroke-width="0.5">Sep</text>
<text x="1508.96" y="661.80" font-family="Liberation Sans, sans-serif" font-size="13.5" font-weight="400" fill="#373d3f" text-anchor="middle" stroke="#373d3f" stroke-width="0.5">Sep</text>
<text x="886.66" y="862.80" font-family="Liberation Sans, sans-serif" font-size="13.5" font-weight="400" fill="#373d3f" text-anchor="middle" stroke="#373d3f" stroke-width="0.5">Oct</text>
<text x="1553.14" y="661.80" font-family="Liberation Sans, sans-serif" font-size="13.5" font-weight="400" fill="#373d3f" text-anchor="middle" stroke="#373d3f" stroke-width="0.5">Oct</text>
<text x="956.78" y="862.80" font-family="Liberation Sans, sans-serif" font-size="13.5" font-weight="400" fill="#373d3f" text-anchor="middle" stroke="#373d3f" stroke-width="0.5">Nov</text>
<text x="1597.32" y="661.80" font-family="Liberation Sans, sans-serif" font-size="13.5" font-weight="400" fill="#373d3f" text-anchor="middle" stroke="#373d3f" stroke-width="0.5">Nov</text>
<text x="1026.90" y="862.80" font-family="Liberation Sans, sans-serif" font-size="13.5" font-weight="400" fill="#373d3f" text-anchor="middle" stroke="#373d3f" stroke-width="0.5">Dec</text>
<text x="1641.51" y="661.80" font-family="Liberation Sans, sans-serif" font-size="13.5" font-weight="400" fill="#373d3f" text-anchor="middle" stroke="#373d3f" stroke-width="0.5">Dec</text>
<text x="255.50" y="837.80" font-family="Liberation Sans, sans-serif" font-size="12" font-weight="700" fill="#fff" text-anchor="middle">$10</text>
<text x="325.32" y="839.60" font-family="Liberation Sans, sans-serif" font-size="12" font-weight="700" fill="#fff" text-anchor="middle">$0</text>
<text x="395.44" y="839.60" font-family="Liberation Sans, sans-serif" font-size="12" font-weight="700" fill="#fff" text-anchor="middle">$0</text>
<text x="465.55" y="839.60" font-family="Liberation Sans, sans-serif" font-size="12" font-weight="700" fill="#fff" text-anchor="middle">$0</text>
<text x="535.67" y="839.60" font-family="Liberation Sans, sans-serif" font-size="12" font-weight="700" fill="#fff" text-anchor="middle">$0</text>
<text x="605.79" y="839.60" font-family="Liberation Sans, sans-serif" font-size="12" font-weight="700" fill="#fff" text-anchor="middle">$0</text>
<text x="675.91" y="839.60" font-family="Liberation Sans, sans-serif" font-size="12" font-weight="700" fill="#fff" text-anchor="middle">$0</text>
<text x="746.03" y="839.60" font-family="Liberation Sans, sans-serif" font-size="12" font-weight="700" fill="#fff" text-anchor="middle">$0</text>
<text x="816.15" y="839.60" font-family="Liberation Sans, sans-serif" font-size="12" font-weight="700" fill="#fff" text-anchor="middle">$0</text>
<text x="886.26" y="839.60" font-family="Liberation Sans, sans-serif" font-size="12" font-weight="700" fill="#fff" text-anchor="middle">$0</text>
<text x="956.38" y="839.60" font-family="Liberation Sans, sans-serif" font-size="12" font-weight="700" fill="#fff" text-anchor="middle">$0</text>
<text x="1026.50" y="839.60" font-family="Liberation Sans, sans-serif" font-size="12" font-weight="700" fill="#fff" text-anchor="middle">$0</text>
<text x="1123.30" y="376.40" font-family="Liberation Sans, sans-serif" font-size="11.5" font-weight="400" fill="#373d3f" text-anchor="end" stroke="#373d3f" stroke-width="0.45">24.00</text>
<text x="1123.30" y="442.20" font-family="Liberation Sans, sans-serif" font-size="11.5" font-weight="400" fill="#373d3f" text-anchor="end" stroke="#373d3f" stroke-width="0.45">18.00</text>
<text x="1123.30" y="507.40" font-family="Liberation Sans, sans-serif" font-size="11.5" font-weight="400" fill="#373d3f" text-anchor="end" stroke="#373d3f" stroke-width="0.45">12.00</text>
<text x="1123.30" y="573.00" font-family="Liberation Sans, sans-serif" font-size="11.5" font-weight="400" fill="#373d3f" text-anchor="end" stroke="#373d3f" stroke-width="0.45">6.00</text>
<text x="1123.30" y="637.90" font-family="Liberation Sans, sans-serif" font-size="11.5" font-weight="400" fill="#373d3f" text-anchor="end" stroke="#373d3f" stroke-width="0.45">0.00</text>
</svg>
<span class="t" id="t0" style="font-size:22px;font-weight:700;color:#7b1fff;top:25.00px;left:246.44px;transform:scaleX(0.8776);transform-origin:left center;">SMM</span>
<span class="t" id="t1" style="font-size:22px;font-weight:700;color:#b044ff;top:25.00px;left:293.93px;transform:scaleX(0.8612);transform-origin:left center;">Matrix</span>
<span class="t" id="t2" style="font-size:14.5px;font-weight:400;color:#ffffff;top:28.00px;left:578.50px;transform:scaleX(0.9826);transform-origin:left center;-webkit-text-stroke:0.35px #ffffff;">DASHBOARD</span>
<span class="t" id="t3" style="font-size:14.5px;font-weight:400;color:#ffffff;top:28.00px;left:698.76px;transform:scaleX(0.9491);transform-origin:left center;-webkit-text-stroke:0.35px #ffffff;">ORDER</span>
<span class="t" id="t4" style="font-size:14.5px;font-weight:400;color:#ffffff;top:28.00px;left:793.28px;transform:scaleX(0.9743);transform-origin:left center;-webkit-text-stroke:0.35px #ffffff;">SERVICES</span>
<span class="t" id="t5" style="font-size:14.5px;font-weight:400;color:#ffffff;top:28.00px;left:894.64px;transform:scaleX(0.9792);transform-origin:left center;-webkit-text-stroke:0.35px #ffffff;">ADD FUND</span>
<span class="t" id="t6" style="font-size:14.5px;font-weight:400;color:#ffffff;top:28.00px;left:997.25px;transform:scaleX(0.9836);transform-origin:left center;-webkit-text-stroke:0.35px #ffffff;">HISTORY</span>
<span class="t" id="t7" style="font-size:14.5px;font-weight:400;color:#ffffff;top:28.00px;left:1105.74px;transform:scaleX(0.9987);transform-origin:left center;-webkit-text-stroke:0.35px #ffffff;">NOTICE</span>
<span class="t" id="t8" style="font-size:14px;font-weight:400;color:#ffffff;top:28.00px;left:1442.89px;transform:scaleX(1.0084);transform-origin:left center;-webkit-text-stroke:0.35px #ffffff;">USD</span>
<span class="t" id="t9" style="font-size:11.5px;font-weight:700;color:#ffffff;top:21.00px;left:1517.40px;transform:translateX(-50%);">9</span>
<span class="t" id="t10" style="font-size:15.3px;font-weight:400;color:#ffffff;top:28.00px;left:1582.22px;letter-spacing:0.618px;-webkit-text-stroke:0.7px #ffffff;">Alex Hales</span>
<span class="t" id="t11" style="font-size:32px;font-weight:400;color:#06203a;top:106.00px;left:200.47px;letter-spacing:0.193px;-webkit-text-stroke:1.0px #06203a;">Dashboard</span>
<span class="t" id="t12" style="font-size:18px;font-weight:400;color:#0b1d39;top:151.00px;left:199.82px;letter-spacing:0.387px;-webkit-text-stroke:0.4px #0b1d39;">Home</span>
<span class="t" id="t13" style="font-size:18px;font-weight:400;color:#706fc8;top:151.00px;left:282.67px;letter-spacing:0.172px;-webkit-text-stroke:0.3px #706fc8;">Dashboard</span>
<span class="t" id="t14" style="font-size:16px;font-weight:400;color:#2b2d33;top:232.00px;left:254.79px;letter-spacing:0.124px;">Please allow your browser to receive instant push notifications. Enable it in your notification settings.</span>
<span class="t" id="t15" style="font-size:16px;font-weight:400;color:#ffffff;top:232.00px;left:1008.69px;letter-spacing:0.502px;-webkit-text-stroke:0.45px #ffffff;">Allow</span>
<span class="t" id="t16" style="font-size:18px;font-weight:400;color:#0b1d39;top:332.00px;left:280.70px;letter-spacing:0.261px;-webkit-text-stroke:0.55px #0b1d39;">Balance</span>
<span class="t" id="t17" style="font-size:18px;font-weight:400;color:#0b1d39;top:332.00px;left:571.90px;letter-spacing:0.407px;-webkit-text-stroke:0.55px #0b1d39;">Deposits</span>
<span class="t" id="t18" style="font-size:18px;font-weight:400;color:#0b1d39;top:332.00px;left:864.22px;letter-spacing:0.227px;-webkit-text-stroke:0.55px #0b1d39;">Orders</span>
<span class="t" id="t19" style="font-size:14.5px;font-weight:400;color:#1c1c1c;top:403.00px;left:297.54px;letter-spacing:-0.102px;-webkit-text-stroke:0.35px #1c1c1c;">8,902.47 USD</span>
<span class="t" id="t20" style="font-size:14.5px;font-weight:400;color:#1c1c1c;top:403.00px;left:553.91px;transform:scaleX(0.9608);transform-origin:left center;-webkit-text-stroke:0.35px #1c1c1c;">10 USD</span>
<span class="t" id="t21" style="font-size:14.5px;font-weight:400;color:#1c1c1c;top:403.00px;left:665.71px;transform:scaleX(0.9547);transform-origin:left center;-webkit-text-stroke:0.35px #1c1c1c;">10 USD</span>
<span class="t" id="t22" style="font-size:14.5px;font-weight:400;color:#1c1c1c;top:403.00px;left:846.70px;-webkit-text-stroke:0.35px #1c1c1c;">9</span>
<span class="t" id="t23" style="font-size:14.5px;font-weight:400;color:#1c1c1c;top:403.00px;left:919.91px;-webkit-text-stroke:0.35px #1c1c1c;">0</span>
<span class="t" id="t24" style="font-size:14.5px;font-weight:400;color:#1c1c1c;top:403.00px;left:995.34px;-webkit-text-stroke:0.35px #1c1c1c;">6</span>
<span class="t" id="t25" style="font-size:24px;font-weight:400;color:#0b1d39;top:299.00px;left:1074.84px;letter-spacing:0.436px;-webkit-text-stroke:0.55px #0b1d39;">Transaction Statistics</span>
<span class="t" id="t26" style="font-size:24px;font-weight:400;color:#0b1d39;top:480.00px;left:200.21px;letter-spacing:0.448px;-webkit-text-stroke:0.55px #0b1d39;">Deposit Statistics</span>
<span class="t" id="t27" style="font-size:24px;font-weight:400;color:#0b1d39;top:948.00px;left:221.31px;letter-spacing:0.327px;-webkit-text-stroke:0.55px #0b1d39;">Latest Transaction</span>
<span class="t" id="t28" style="font-size:18px;font-weight:400;color:#0b1d39;top:775.00px;left:1156.16px;letter-spacing:0.368px;-webkit-text-stroke:0.55px #0b1d39;">Support Tickets</span>
<span class="t" id="t29" style="font-size:14.5px;font-weight:400;color:#1c1c1c;top:846.00px;left:1194.07px;">2</span>
<span class="t" id="t30" style="font-size:14.5px;font-weight:400;color:#1c1c1c;top:846.00px;left:1378.67px;">2</span>
<span class="t" id="t31" style="font-size:14.5px;font-weight:400;color:#1c1c1c;top:846.00px;left:1564.57px;">2</span>
<span class="t" id="t32" style="font-size:18px;font-weight:400;color:#0b1d39;top:1013.00px;left:241.07px;letter-spacing:0.306px;-webkit-text-stroke:0.55px #0b1d39;">Transaction ID</span>
<span class="t" id="t33" style="font-size:18px;font-weight:400;color:#0b1d39;top:1013.00px;left:645.44px;letter-spacing:0.434px;-webkit-text-stroke:0.55px #0b1d39;">Amount</span>
<span class="t" id="t34" style="font-size:18px;font-weight:400;color:#0b1d39;top:1013.00px;left:927.90px;letter-spacing:0.227px;-webkit-text-stroke:0.55px #0b1d39;">Remarks</span>
<span class="t" id="t35" style="font-size:18px;font-weight:400;color:#0b1d39;top:1013.00px;left:1332.47px;letter-spacing:0.198px;-webkit-text-stroke:0.55px #0b1d39;">Time &amp; Date</span>
<span class="t" id="t36" style="font-size:16px;font-weight:400;color:#2f3237;top:1069.00px;left:241.83px;letter-spacing:0.740px;">#D55919899419</span>
<span class="t" id="t37" style="font-size:16px;font-weight:400;color:#1f8f55;top:1069.00px;left:644.62px;letter-spacing:-0.309px;">+ 10 USD</span>
<span class="t" id="t38" style="font-size:16px;font-weight:400;color:#2f3237;top:1069.00px;left:927.79px;letter-spacing:0.073px;">Deposit Via Stripe</span>
<span class="t" id="t39" style="font-size:16px;font-weight:400;color:#2f3237;top:1069.00px;left:1331.80px;letter-spacing:1.100px;">2025/01/05</span>
<span class="t" id="t40" style="font-size:16px;font-weight:400;color:#2f3237;top:1122.00px;left:241.83px;letter-spacing:0.736px;">#T55919899420</span>
<span class="t" id="t41" style="font-size:16px;font-weight:400;color:#dc3545;top:1122.00px;left:644.69px;letter-spacing:-0.085px;">- 1.29 USD</span>
<span class="t" id="t42" style="font-size:16px;font-weight:400;color:#2f3237;top:1122.00px;left:927.79px;letter-spacing:0.085px;">Place order</span>
<span class="t" id="t43" style="font-size:16px;font-weight:400;color:#2f3237;top:1122.00px;left:1331.80px;letter-spacing:1.100px;">2025/01/05</span>
<span class="t" id="t44" style="font-size:16px;font-weight:400;color:#2f3237;top:1175.00px;left:241.83px;letter-spacing:0.749px;">#T55919899421</span>
<span class="t" id="t45" style="font-size:16px;font-weight:400;color:#dc3545;top:1175.00px;left:644.69px;letter-spacing:-0.085px;">- 10.2 USD</span>
<span class="t" id="t46" style="font-size:16px;font-weight:400;color:#2f3237;top:1175.00px;left:927.79px;letter-spacing:0.085px;">Place order</span>
<span class="t" id="t47" style="font-size:16px;font-weight:400;color:#2f3237;top:1175.00px;left:1331.80px;letter-spacing:1.100px;">2025/01/05</span>
<span class="t" id="t48" style="font-size:16px;font-weight:400;color:#2f3237;top:1229.00px;left:241.83px;letter-spacing:0.751px;">#T55919899422</span>
<span class="t" id="t49" style="font-size:16px;font-weight:400;color:#dc3545;top:1229.00px;left:644.69px;letter-spacing:-0.085px;">- 2.16 USD</span>
<span class="t" id="t50" style="font-size:16px;font-weight:400;color:#2f3237;top:1229.00px;left:927.79px;letter-spacing:0.085px;">Place order</span>
<span class="t" id="t51" style="font-size:16px;font-weight:400;color:#2f3237;top:1229.00px;left:1331.80px;letter-spacing:1.100px;">2025/01/05</span>
<span class="t" id="t52" style="font-size:14.5px;font-weight:400;color:#0b1d39;top:1357.00px;left:794.88px;letter-spacing:-0.293px;">© Copyright <b>SMM Matrix.</b> All Rights Reserved</span>
<span class="t" id="t53" style="font-size:12px;font-weight:700;color:#ffffff;top:469.00px;left:1769.75px;letter-spacing:-0.256px;">Swap Dashboard</span>
<span class="t" id="t54" style="font-size:12px;font-weight:400;color:#373d3f;top:679.00px;left:1230.13px;letter-spacing:0.199px;">Total Deposit</span>
<span class="t" id="t55" style="font-size:12px;font-weight:400;color:#373d3f;top:679.00px;left:1327.03px;letter-spacing:0.217px;">Total Transactions</span>
<span class="t" id="t56" style="font-size:12px;font-weight:400;color:#373d3f;top:679.00px;left:1453.03px;letter-spacing:0.156px;">Total Received</span>

</body></html>
